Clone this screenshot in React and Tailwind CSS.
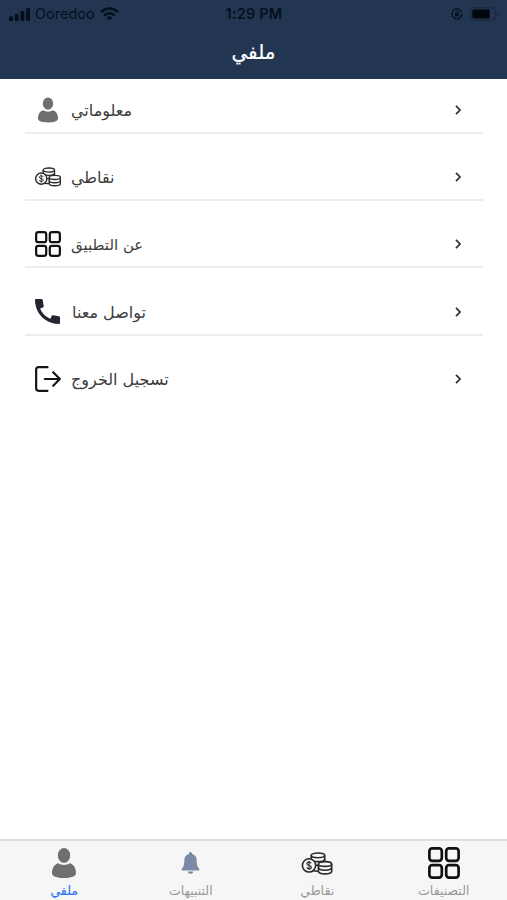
import React, { useState } from 'react';

function PersonIcon({ className }) {
  return (
    <svg viewBox="0 0 24 30" className={className} fill="#6f6f6f">
      <ellipse cx="12" cy="7.4" rx="6.2" ry="7.4" />
      <path d="M6.3 15.3C2.4 16.3 0 20 0 25C0 28.600 5 30 12 30C19 30 24 28.600 24 25C24 20 21.600 16.300 17.700 15.300C16.200 16.400 14.300 17 12 17C9.700 17 7.800 16.400 6.300 15.300Z" />
    </svg>
  );
}

function CoinsIcon({ className }) {
  return (
    <svg viewBox="0 0 32 24" className={className} fill="#fafafa" stroke="#2b2b2b" strokeWidth="1.7">
      <path d="M10 3.500v14c0 1.500 3 2.600 7 2.600s7-1.100 7-2.600v-14" />
      <path d="M10 7.500c0 1.500 3 2.500 7 2.500s7-1 7-2.500M10 11.500c0 1.500 3 2.500 7 2.500s7-1 7-2.500" fill="none" />
      <ellipse cx="17" cy="3.500" rx="7" ry="2.500" />
      <path d="M17.500 12.500v7.600c0 1.600 3 2.700 6.900 2.700s6.900-1.100 6.900-2.700v-7.600" />
      <path d="M17.500 16.300c0 1.600 3 2.700 6.900 2.700s6.900-1.100 6.900-2.700" fill="none" />
      <ellipse cx="24.400" cy="12.500" rx="6.900" ry="2.500" />
      <circle cx="7.700" cy="14" r="6.900" />
      <path
        d="M10 11.900c-.3-.9-1.200-1.400-2.300-1.400-1.300 0-2.300.6-2.300 1.700 0 2.400 4.700 1.200 4.700 3.600 0 1.100-1 1.700-2.400 1.700-1.200 0-2.200-.5-2.400-1.500M7.700 9.200v9.600"
        fill="none"
        strokeWidth="1.2"
      />
    </svg>
  );
}

function GridIcon({ className }) {
  return (
    <svg viewBox="0 0 32 32" className={className} fill="none" stroke="#111" strokeWidth="2.7">
      <rect x="1.400" y="1.400" width="12.400" height="12.400" rx="2.800" />
      <rect x="18.200" y="1.400" width="12.400" height="12.400" rx="2.800" />
      <rect x="1.400" y="18.200" width="12.400" height="12.400" rx="2.800" />
      <rect x="18.200" y="18.200" width="12.400" height="12.400" rx="2.800" />
    </svg>
  );
}

function PhoneIcon({ className }) {
  return (
    <svg viewBox="0 0 25 25" className={className} fill="#25242f">
      <path d="M1.2 0H6.500C7.200 0 7.600.4 7.700 1.100L8.700 7C8.800 7.700 8.500 8.300 7.800 8.500L5.200 9.500C6.800 14 10.800 18 15.500 19.800L16.500 17.200C16.800 16.500 17.300 16.200 18 16.300L23.900 17.300C24.600 17.400 25 17.800 25 18.500V23.800C25 24.600 24.500 25 23.700 25C10.300 24.700.3 14.700 0 1.300C0 .5.400 0 1.200 0Z" />
    </svg>
  );
}

function LogoutIcon({ className }) {
  return (
    <svg viewBox="0 0 25 25" className={className} fill="none" stroke="#151515" strokeWidth="2.1" strokeLinecap="round" strokeLinejoin="round">
      <path d="M12 1.100H3.500C2 1.100 1.100 2 1.100 3.500v18c0 1.500.9 2.400 2.400 2.400H12" />
      <path d="M9.500 12.500H23.900M17.500 6l6.400 6.500-6.400 6.500" />
    </svg>
  );
}

function BellIcon({ className }) {
  return (
    <svg viewBox="0 0 18 22" className={className} fill="#7b8ba7">
      <path d="M9 0c-.9 0-1.500.6-1.500 1.500v.6C4.500 2.800 2.800 5.200 2.800 8.300c0 4.700-.8 6.700-2.300 8.200-.9.9-.4 2 .7 2h15.600c1.100 0 1.600-1.100.7-2-1.500-1.500-2.300-3.500-2.300-8.200 0-3.100-1.700-5.500-4.700-6.200v-.6C10.500.6 9.900 0 9 0z" />
      <path d="M6.200 19.500h5.600c-.3 1.400-1.400 2.300-2.800 2.300s-2.500-.9-2.800-2.300z" />
    </svg>
  );
}

function StatusBar() {
  return (
    <div className="flex h-7 items-center justify-between pl-[9px] pr-2 font-['Inter',sans-serif] text-[#05101d]">
      <div className="flex w-[140px] items-center">
        <svg viewBox="0 0 21 13" className="h-[13px] w-[21px]" fill="currentColor">
          <rect x="0" y="8.500" width="4" height="4.500" rx="1" />
          <rect x="5.700" y="6" width="4" height="7" rx="1" />
          <rect x="11.400" y="3" width="4" height="10" rx="1" />
          <rect x="17" y="0" width="4" height="13" rx="1" />
        </svg>
        <span className="ml-[5px] w-[61px] text-[14.5px] leading-none">Ooredoo</span>
        <svg viewBox="0 0 19 14" className="ml-[4px] h-[14px] w-[19px]" fill="none" stroke="currentColor" strokeWidth="2.6">
          <path d="M1 5.200c4.800-5 12.200-5 17 0M4.200 8.500c3-3.100 7.600-3.100 10.600 0" />
          <path d="M9.500 13.500l-2.900-2.900c1.600-1.600 4.200-1.600 5.800 0z" fill="currentColor" stroke="none" />
        </svg>
      </div>
      <span className="text-[14.5px] leading-none font-semibold tracking-[0.2px]">1:29 PM</span>
      <div className="flex w-[140px] items-center justify-end gap-[7px]">
        <svg viewBox="0 0 12 12" className="h-[12px] w-[12px]" fill="none" stroke="currentColor" strokeWidth="1.3">
          <path d="M10.800 7.200A5 5 0 1 1 10.800 4.500" />
          <rect x="4" y="5.200" width="4" height="3.300" fill="currentColor" stroke="none" />
          <path d="M4.700 5.500V4.600a1.300 1.300 0 0 1 2.600 0v.9" strokeWidth="1" />
          <path d="M9.500 6h2.500l-1.200 2z" fill="currentColor" stroke="none" />
        </svg>
        <svg viewBox="0 0 29 14" className="h-[14px] w-[29px]">
          <rect x=".6" y=".6" width="24.800" height="12.800" rx="3.500" fill="none" stroke="#1a2a41" strokeWidth="1.2" />
          <rect x="2.300" y="2.500" width="17.500" height="9" rx="1.500" fill="#02070d" />
          <path d="M26.800 4.700c2 .8 2 3.800 0 4.600z" fill="#1a2a41" />
        </svg>
      </div>
    </div>
  );
}

const menuItems = [
  { label: 'معلوماتي', size: 'text-[16px]', icon: <PersonIcon className="h-[26px] w-5" /> },
  { label: 'نقاطي', size: 'text-[16px]', icon: <CoinsIcon className="h-[20px] w-[26px]" /> },
  { label: 'عن التطبيق', size: 'text-[15px]', icon: <GridIcon className="h-[26px] w-[26px]" /> },
  { label: 'تواصل معنا', size: 'text-[16px] pl-px', icon: <PhoneIcon className="h-[25px] w-[25px]" /> },
  { label: 'تسجيل الخروج', size: 'text-[16px]', icon: <LogoutIcon className="h-[26px] w-[26px]" /> },
];

const tabs = [
  { id: 'profile', label: 'ملفي', icon: <PersonIcon className="h-[30px] w-6" /> },
  { id: 'alerts', label: 'التنبيهات', icon: <BellIcon className="h-[22px] w-[19px]" /> },
  { id: 'points', label: 'نقاطي', icon: <CoinsIcon className="h-[23px] w-[32px]" /> },
  { id: 'categories', label: 'التصنيفات', icon: <GridIcon className="h-8 w-8" /> },
];

function App() {
  const [activeTab, setActiveTab] = useState('profile');

  return (
    <div className="flex h-[900px] w-full flex-col bg-white font-['DejaVu_Sans',sans-serif]">
      {/* Header */}
      <header className="h-[79px] shrink-0 bg-[#223651]">
        <StatusBar />
        <h1
          className="flex h-[48px] items-center justify-center text-[20px] font-normal text-white [-webkit-text-stroke:0.2px_white]"
          dir="rtl"
        >
          ملفي
        </h1>
      </header>

      {/* Menu */}
      <ul className="flex flex-1 flex-col gap-[19.2px] pl-[25px] pr-6 pt-[7px]">
        {menuItems.map((item) => (
          <li
            key={item.label}
            className="flex h-12 items-center border-b-2 border-[#ececec] pt-[2px] last:border-transparent"
          >
            <span className="ml-[9.5px] flex w-[26px] shrink-0 justify-center">{item.icon}</span>
            <span className={`ml-[10.5px] flex-1 pt-[2px] text-[#3c3c3c] ${item.size}`}>{item.label}</span>
            <svg viewBox="0 0 6 10" className="mr-[22px] h-[10px] w-[6px]" fill="none" stroke="#333" strokeWidth="1.8">
              <path d="M1 .8L5 5 1 9.200" />
            </svg>
          </li>
        ))}
      </ul>

      {/* Bottom tabs */}
      <nav className="grid h-[61px] shrink-0 grid-cols-4 border-t-2 border-[#dfdfdf] bg-[#f6f6f6] pl-px">
        {tabs.map((tab) => (
          <button
            key={tab.id}
            onClick={() => setActiveTab(tab.id)}
            className="flex flex-col items-center"
          >
            <span className="flex h-[44px] items-center justify-center">{tab.icon}</span>
            <span
              className={`text-[12.5px] leading-[12px] ${activeTab === tab.id ? 'text-[#3478f6] [-webkit-text-stroke:0.2px_#3478f6]' : 'text-[#999]'}`}
            >
              {tab.label}
            </span>
          </button>
        ))}
      </nav>
    </div>
  );
}

export default App;
